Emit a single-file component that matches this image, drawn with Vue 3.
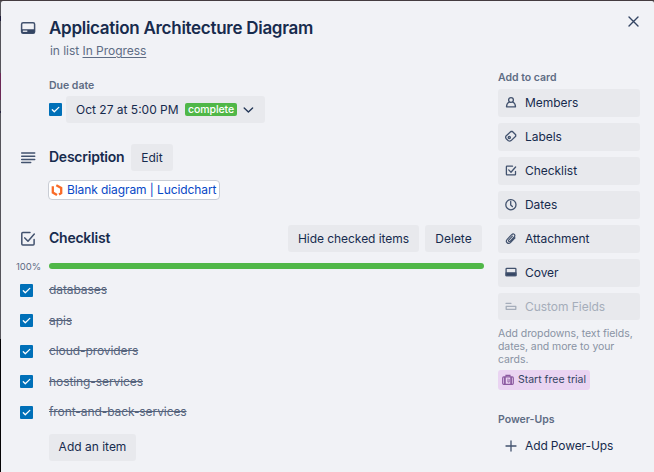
<script setup>
const items = ['databases', 'apis', 'cloud-providers', 'hosting-services', 'front-and-back-services']
const actions = [
  { id: 'members', label: 'Members' },
  { id: 'labels', label: 'Labels' },
  { id: 'checklist', label: 'Checklist' },
  { id: 'dates', label: 'Dates' },
  { id: 'attachment', label: 'Attachment' },
  { id: 'cover', label: 'Cover' },
  { id: 'fields', label: 'Custom Fields' },
]
</script>

<template>
  <div class="board">
    <div class="edge"></div>
    <div class="dialog">
      <main class="main">
        <header class="row title-row">
          <svg class="lead" width="16" height="14" viewBox="0 0 16 14">
            <rect x="1.600" y="1.800" width="13" height="10.400" rx="1.500" fill="none" stroke="#42526e" stroke-width="1.500" />
            <path d="M1.600 8.200h13v2.800q0 1.200-1.200 1.200H2.800q-1.200 0-1.200-1.200z" fill="#344563" />
            <path d="M2.800 10.200h4.500" stroke="#f1f2f6" stroke-width="1.300" />
          </svg>
          <h1>Application Architecture Diagram</h1>
        </header>
        <p class="in-list">in list <a>In Progress</a></p>
        <h3 class="due-label">Due date</h3>
        <div class="due">
          <span class="check"><svg width="13" height="13" viewBox="0 0 13 13"><path d="M3.300 6.700l2 2L9.800 4.400" /></svg></span>
          <button class="due-btn">
            <span class="due-time">Oct 27 at 5:00 PM</span>
            <span class="badge">complete</span>
            <svg width="11" height="8" viewBox="0 0 11 8"><path d="M1.200 2l4.200 4 4.200-4" fill="none" stroke="#253858" stroke-width="1.400" stroke-linecap="round" stroke-linejoin="round" /></svg>
          </button>
        </div>
        <section class="row desc-row">
          <svg class="lead" width="16" height="14" viewBox="0 0 16 14" stroke="#42526e" stroke-width="1.500" stroke-linecap="round"><path d="M1.700 2h13M1.700 5.200h13M1.700 8.400h13M1.700 11.600h9" /></svg>
          <h2 class="desc">Description</h2>
          <button class="edit">Edit</button>
        </section>
        <a class="link">
          <svg width="12" height="13" viewBox="0 0 12 13" fill="none" stroke="#f96b28" stroke-width="2.300"><path d="M1.800 2.300v6.200l4.200 2.600M5.300 1.200l4.900 2.700v5.300L8 10.500" /></svg>
          <span>Blank diagram | Lucidchart</span>
        </a>
        <section class="row check-row">
          <svg class="lead" width="16" height="16" viewBox="0 0 16 16" fill="none" stroke="#42526e" stroke-width="1.500" stroke-linecap="round" stroke-linejoin="round"><path d="M10 1.600H2.800Q1.800 1.600 1.800 2.600v10.400q0 1 1 1h10.300q1 0 1-1V8.600M4.800 6.900l3.200 3.300 6.300-7.200" /></svg>
          <h2 class="cl">Checklist</h2>
          <button class="hide">Hide checked items</button>
          <button class="delete">Delete</button>
        </section>
        <div class="progress"><span class="pct">100%</span><div class="bar"></div></div>
        <ul class="items">
          <li v-for="item in items" :key="item">
            <span class="check"><svg width="13" height="13" viewBox="0 0 13 13"><path d="M3.300 6.700l2 2L9.800 4.400" /></svg></span>
            <s>{{ item }}</s>
          </li>
        </ul>
        <button class="add">Add an item</button>
      </main>

      <aside class="side">
        <svg class="close" width="11" height="11" viewBox="0 0 11 11"><path d="M1 1l9 9M10 1l-9 9" stroke="#344563" stroke-width="1.400" stroke-linecap="round" /></svg>
        <h3 class="side-label">Add to card</h3>
        <div class="actions">
          <button v-for="a in actions" :key="a.id" :class="['action', a.id]">
            <svg width="14" height="14" viewBox="0 0 14 14" fill="none" stroke="#42526e" stroke-width="1.300" stroke-linecap="round" stroke-linejoin="round">
              <template v-if="a.id === 'members'"><circle cx="7" cy="4" r="2.400" /><path d="M5.300 6Q2.600 7.200 2.500 10.800h9Q11.400 7.200 8.700 6" /></template>
              <template v-else-if="a.id === 'labels'"><path d="M6.900 1.500h1.500l3.300 3.300v1.500l-4.600 4.300q-1.300 1-2.700.2L2.200 8.700q-1-1.200-.2-2.700z" /><circle cx="5.300" cy="7.600" r="1.100" /></template>
              <path v-else-if="a.id === 'checklist'" d="M8.500 2.200H3q-.6 0-.6.600v7.500q0 .6.600.6h7.900q.6 0 .6-.6V7.300M4.700 5.900l2.300 2.300 4.600-5.200" />
              <template v-else-if="a.id === 'dates'"><circle cx="6.900" cy="6.700" r="5.100" /><path d="M6.700 3.500v3.500l1.700 1.500" /></template>
              <path v-else-if="a.id === 'attachment'" d="M11 5.900l-4.300 4.500c-2.500 2.600-5.800-.5-3.500-3.100l4.500-4.600c1.900-1.900 4.200.4 2.500 2.300L6.300 9.100c-1.200 1.200-2.400-.1-1.400-1.300l3.500-3.600" stroke-width="1.200" />
              <template v-else-if="a.id === 'cover'"><rect x="2.100" y="2.300" width="9.800" height="7.400" rx=".8" /><path d="M2.100 6.800h9.800v2.900H2.100z" fill="#344563" /></template>
              <path v-else d="M2 3.300h5M2.200 6.400h9.600v2.900H2.200z" stroke="#a5adba" />
            </svg>
            <span>{{ a.label }}</span>
          </button>
        </div>
        <p class="hint">Add dropdowns, text fields,<br />dates, and more to your<br />cards.</p>
        <button class="trial">
          <svg width="12" height="12" viewBox="0 0 12 12" fill="none" stroke="#8b5aa0" stroke-width="1.200"><path d="M4 2.700V1.300h4v1.400" /><rect x=".7" y="2.900" width="10.600" height="7.400" rx="1" /><path d="M2.900 3v7.300M9.100 3v7.300" stroke-width="1.700" /><path d="M5.900 4.500v3.600h1.300V5" stroke-width=".8" /></svg>
          <span>Start free trial</span>
        </button>
        <h3 class="power">Power-Ups</h3>
        <button class="add-power">
          <svg width="12" height="12" viewBox="0 0 12 12"><path d="M6 1v10M1 6h10" stroke="#42526e" stroke-width="1.300" stroke-linecap="round" /></svg>
          <span>Add Power-Ups</span>
        </button>
      </aside>
    </div>
  </div>
</template>

<style>
body { margin: 0; overflow: hidden; }
</style>

<style scoped>
* { box-sizing: border-box; }
.board { width: 654px; height: 472px; display: grid; grid-template-columns: 1px 653px; padding-top: 1px; background: #443c40; font-family: Inter, "Liberation Sans", sans-serif; color: #172b4d; white-space: nowrap; }
.edge { background: linear-gradient(#55545a 0 15px, #1d1b38 15px 20px, #55545a 20px 72px, #6b2855 72px 99px, #55545a 99px 110px, #292641 110px 112px, #55545a 112px 338px, #050305 338px); }
.dialog { display: flex; height: 471px; background: #f1f2f6; border-radius: 2px 2px 0 0; }
.main { width: 483px; padding: 13px 0 0 19px; display: flex; flex-direction: column; align-items: flex-start; }
h1, h2, h3, p, ul { margin: 0; padding: 0; }
button { font: 400 12px/16px Inter, "Liberation Sans", sans-serif; color: #172b4d; border: 0; border-radius: 3px; background: #e8e9ed; padding: 0; height: 27px; display: flex; align-items: center; justify-content: center; white-space: nowrap; flex: none; }
svg { display: block; flex: none; }
.row { display: flex; align-items: center; width: 464px; height: 27px; }
.lead { margin-right: 13px; }
h1 { font-size: 17px; line-height: 27px; padding-top: 2px; font-weight: 600; letter-spacing: -.28px; }
h2 { font-size: 14px; line-height: 20px; font-weight: 600; letter-spacing: -.24px; margin-top: -2px; }
h3 { font-size: 10.500px; line-height: 14px; font-weight: 600; color: #5e6c84; }
.in-list { margin: 2px 0 0 30px; font-size: 12px; line-height: 16px; letter-spacing: -.04px; color: #5e6c84; }
.in-list a { text-decoration: underline; text-underline-offset: 2px; }
.due-label { margin: 20px 0 0 29px; }
.due { display: flex; align-items: center; gap: 4px; margin: 3px 0 0 29px; }
.check { width: 13px; height: 13px; border-radius: 1px; background: #0070b8; flex: none; }
.check path { fill: none; stroke: #fff; stroke-width: 1.300; stroke-linecap: round; stroke-linejoin: round; }
.due-btn { width: 199px; justify-content: flex-start; padding-left: 10px; }
.due-time { width: 109px; text-align: left; }
.badge { width: 52px; height: 13px; margin-right: 6px; background: #50b748; border-radius: 2px; color: #fff; font-size: 10.500px; line-height: 13px; font-weight: 500; letter-spacing: -.08px; }
.desc-row { margin-top: 21px; }
.desc { width: 82px; }
.edit { width: 42px; }
.link { height: 20px; width: 172px; margin: 9px 0 0 28px; display: flex; align-items: center; gap: 4px; padding-left: 2px; background: #fff; border: 1px solid #c9cdd5; border-radius: 4px; font-size: 12px; line-height: 16px; letter-spacing: -.09px; color: #0747c6; }
.link span { padding-bottom: 1px; }
.check-row { margin-top: 25px; }
.cl { width: 239px; }
.hide { width: 131px; margin-right: 6px; letter-spacing: -.05px; }
.delete { width: 57px; }
.progress { display: flex; align-items: center; height: 12px; margin: 8px 0 0 -5px; }
.pct { width: 34px; padding-left: 1px; font-size: 9.500px; color: #5e6c84; }
.bar { width: 435px; height: 6px; border-radius: 3px; background: #50b748; }
.items { list-style: none; margin-top: 3px; }
li { height: 30.500px; display: flex; align-items: center; gap: 16px; font-size: 12px; line-height: 16px; letter-spacing: -.08px; color: #56647d; }
.add { width: 87px; margin: 6px 0 0 29px; }
.side { width: 142px; margin-left: 14px; padding-top: 15px; }
.close { margin-left: 130px; }
.side-label { margin-top: 44px; }
.actions { display: grid; gap: 6px; margin-top: 4px; }
.action { height: 28px; justify-content: flex-start; padding-left: 6px; gap: 7px; letter-spacing: -.04px; }
.action.fields { height: 27px; color: #a5adba; }
.hint { margin-top: 7px; font-size: 10.500px; line-height: 13px; letter-spacing: -.07px; color: #8993a4; }
.trial { width: 92px; height: 20px; margin-top: 4px; gap: 4px; font-size: 10.500px; background: #ead4f2; color: #344563; }
.power { margin-top: 23px; }
.add-power { background: none; width: 142px; justify-content: flex-start; padding-left: 7px; gap: 8px; margin-top: 5px; letter-spacing: -.12px; }
</style>
